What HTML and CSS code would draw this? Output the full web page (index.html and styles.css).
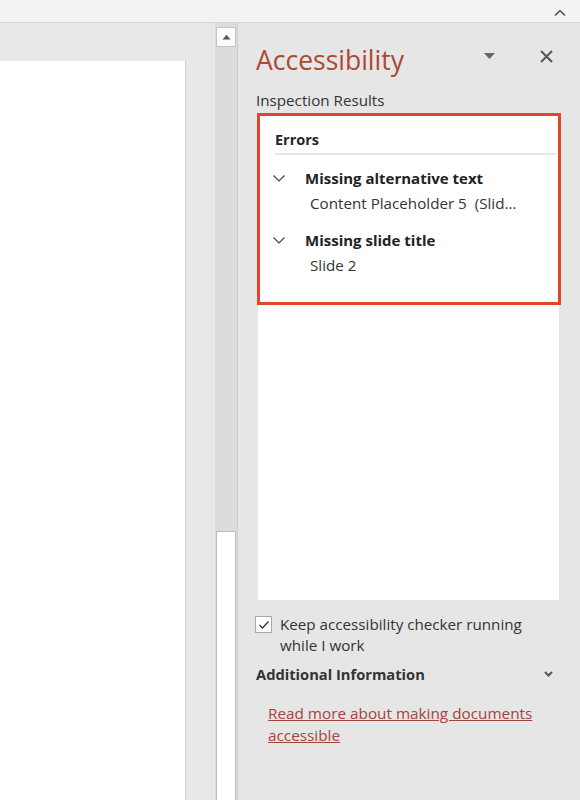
FILE: index.html
```html
<!DOCTYPE html>
<html>
<head>
<meta charset="utf-8">
<link rel="stylesheet" href="styles.css">
</head>
<body>
<div class="topbar">
  <svg class="caret" width="12" height="8" viewBox="0 0 12 8"><path d="M1 6.5 L6 1.8 L11 6.5" fill="none" stroke="#444" stroke-width="1.4"/></svg>
</div>
<div class="main">
  <div class="canvas"><div class="slide"></div></div>
  <div class="scrollbar">
    <div class="sb-up"><svg width="9" height="6" viewBox="0 0 9 6"><path d="M0.5 5.5 L4.5 0.8 L8.5 5.5 Z" fill="#555"/></svg></div>
    <div class="sb-track"></div>
    <div class="sb-thumb"></div>
  </div>
  <div class="divider"></div>
  <div class="panel">
    <div class="panel-head">
      <h1 class="title">Accessibility</h1>
      <svg class="dd" width="11" height="6" viewBox="0 0 11 6"><path d="M0 0 H11 L5.5 6 Z" fill="#666"/></svg>
      <svg class="close" width="13" height="13" viewBox="0 0 13 13"><path d="M1 1 L12 12 M12 1 L1 12" stroke="#555" stroke-width="2"/></svg>
    </div>
    <div class="subhead">Inspection Results</div>
    <div class="results">
      <div class="errors">
        <div class="errors-title">Errors</div>
        <div class="item">
          <div class="item-row">
            <svg class="chev" width="12" height="7" viewBox="0 0 12 7"><path d="M0.5 0.5 L6 6 L11.5 0.5" fill="none" stroke="#444" stroke-width="1.2"/></svg>
            <span class="item-title">Missing alternative text</span>
          </div>
          <div class="item-sub">Content Placeholder 5&nbsp; (Slid...</div>
        </div>
        <div class="item">
          <div class="item-row">
            <svg class="chev" width="12" height="7" viewBox="0 0 12 7"><path d="M0.5 0.5 L6 6 L11.5 0.5" fill="none" stroke="#444" stroke-width="1.2"/></svg>
            <span class="item-title">Missing slide title</span>
          </div>
          <div class="item-sub">Slide 2</div>
        </div>
      </div>
    </div>
    <div class="keep">
      <div class="checkbox"><svg width="12" height="10" viewBox="0 0 12 10"><path d="M1.5 5 L4.5 8 L10.5 1.5" fill="none" stroke="#333" stroke-width="1.3"/></svg></div>
      <div class="keep-text">Keep accessibility checker running while I work</div>
    </div>
    <div class="addl">
      <span>Additional Information</span>
      <svg class="addl-chev" width="9" height="6" viewBox="0 0 9 6"><path d="M1 1 L4.5 4.5 L8 1" fill="none" stroke="#555" stroke-width="2"/></svg>
    </div>
    <a class="link" href="#">Read more about making documents accessible</a>
  </div>
</div>
</body>
</html>
```
FILE: styles.css
```css
html, body {
  margin: 0;
  padding: 0;
}
body {
  width: 580px;
  height: 800px;
  overflow: hidden;
  background: #e6e6e6;
  font-family: "Open Sans", "Noto Sans", sans-serif;
  color: #262626;
}
.topbar {
  height: 22px;
  background: #f3f3f3;
  border-bottom: 1px solid #d4d4d4;
  display: flex;
  justify-content: flex-end;
  align-items: flex-start;
}
.caret {
  margin-top: 9px;
  margin-right: 14px;
}
.main {
  display: flex;
  height: 777px;
}
.canvas {
  width: 215px;
  padding-top: 38px;
  box-sizing: border-box;
  background: #e8e8e8;
}
.slide {
  width: 186px;
  height: 100%;
  background: #fff;
  border-right: 1px solid #cfcfcf;
  box-sizing: border-box;
}
.scrollbar {
  width: 22px;
  background: #dcdcdc;
  display: flex;
  flex-direction: column;
  align-items: center;
  padding-top: 4px;
  box-sizing: border-box;
}
.sb-up {
  width: 18px;
  height: 18px;
  background: #fbfbfb;
  border: 1px solid #c4c4c4;
  display: flex;
  align-items: center;
  justify-content: center;
}
.sb-track {
  flex: 1;
}
.sb-thumb {
  width: 18px;
  height: 268px;
  background: #fff;
  border: 1px solid #bdbdbd;
  border-bottom: none;
}
.divider {
  width: 1px;
  background: #cdcdcd;
}
.panel {
  flex: 1;
  padding-left: 17px;
  display: flex;
  flex-direction: column;
}
.panel-head {
  display: flex;
  align-items: center;
  height: 56px;
  margin-top: 9px;
}
.title {
  margin: 0 0 0 1px;
  font-weight: 400;
  font-size: 26.5px;
  color: #ab4a33;
  flex: 1;
  line-height: 36px;
}
.dd {
  margin-right: 45px;
  margin-top: -8px;
}
.close {
  margin-right: 27px;
  margin-top: -8px;
}
.subhead {
  font-size: 15.2px;
  line-height: 20px;
  margin-left: 1px;
  color: #333;
  margin-top: 2px;
}
.results {
  margin-top: 3px;
  margin-left: 3px;
  width: 301px;
  height: 487px;
  background: #fff;
}
.errors {
  margin-left: -1px;
  margin-right: -2px;
  height: 192px;
  border: 3px solid #e2452a;
  box-sizing: border-box;
  padding: 14px 2px 0 15px;
}
.errors-title {
  font-weight: 700;
  font-size: 14.5px;
  line-height: 20px;
  padding-bottom: 3px;
  border-bottom: 2px solid #e6e6e6;
}
.item {
  padding-top: 13px;
  padding-bottom: 4px;
}
.item-row {
  display: flex;
  align-items: center;
}
.chev {
  margin-left: -2px;
  margin-right: 20px;
}
.item-title {
  font-weight: 700;
  font-size: 15px;
  line-height: 20px;
  color: #222;
}
.item-sub {
  font-size: 15.2px;
  line-height: 20px;
  padding-left: 35px;
  margin-top: 5px;
  color: #333;
}
.keep {
  display: flex;
  margin-top: 14px;
}
.checkbox {
  width: 15px;
  height: 15px;
  border: 1px solid #a8a8a8;
  background: #fff;
  display: flex;
  align-items: center;
  justify-content: center;
  margin-top: 2px;
  margin-right: 8px;
  flex: none;
}
.keep-text {
  font-size: 15.2px;
  line-height: 21px;
  width: 260px;
  color: #333;
}
.addl {
  display: flex;
  align-items: center;
  justify-content: space-between;
  margin-top: 8px;
  margin-left: 1px;
  font-weight: 700;
  font-size: 14.7px;
  line-height: 20px;
  color: #333;
  padding-right: 27px;
}
.link {
  margin-top: 18px;
  margin-left: 13px;
  font-size: 15.3px;
  line-height: 22px;
  color: #a3443a;
  width: 280px;
}
```
